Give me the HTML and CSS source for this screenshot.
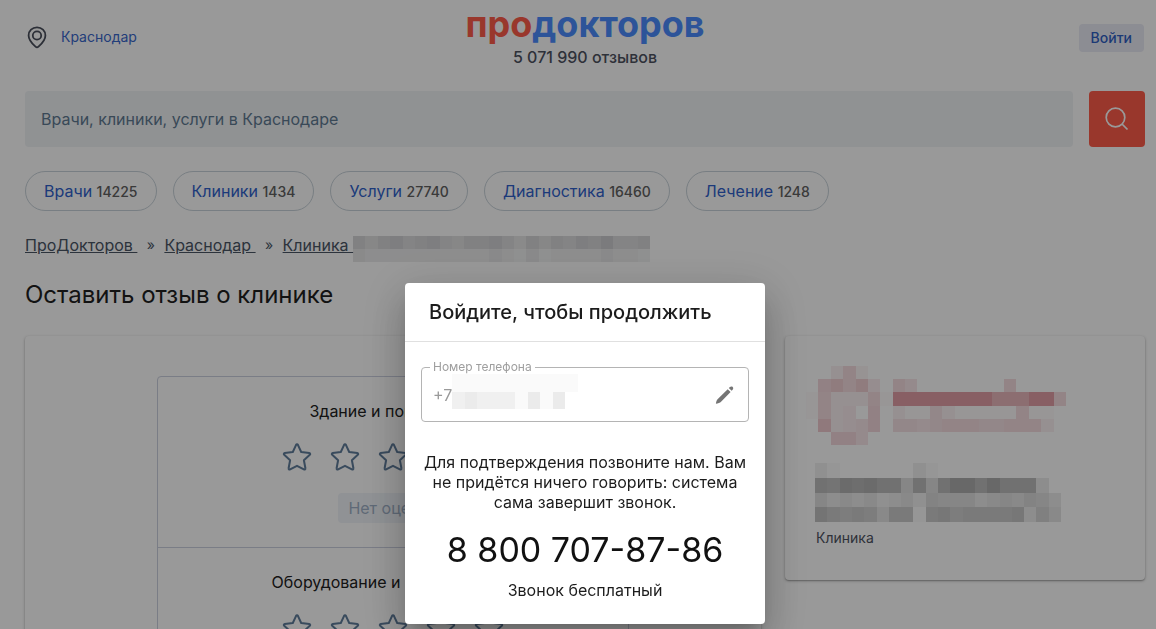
FILE: index.html
```html
<!DOCTYPE html>
<html lang="ru">
<head>
<meta charset="utf-8">
<meta name="viewport" content="width=device-width, initial-scale=1">
<title>ПроДокторов — оставить отзыв о клинике</title>
<link rel="stylesheet" href="styles.css">
</head>
<body>
<svg class="sprite" aria-hidden="true">
  <symbol id="star" viewBox="0 0 32 32">
    <path d="M16 3.200c.4 0 .7.2.9.6l3.300 7.200 8.100 1c.9.1 1.200 1.100.5 1.700l-5.900 5.500 1.500 8.100c.2.9-.7 1.500-1.500 1.100L16 24.800l-6.900 3.600c-.8.4-1.700-.2-1.500-1.100l1.500-8.100-5.900-5.500c-.7-.6-.4-1.600.5-1.700l8.100-1 3.300-7.200c.2-.4.500-.6.900-.6z" fill="none" stroke="currentColor" stroke-width="2" stroke-linejoin="round"/>
  </symbol>
</svg>

<div class="page">
  <header class="header">
    <a class="city" href="#">
      <svg class="city-icon" viewBox="0 0 24 24" aria-hidden="true"><g fill="none" stroke="currentColor" stroke-width="1.800"><path d="M12 2.300c-4.800 0-8.400 3.600-8.400 8.100 0 4.200 3.200 7.900 6.900 11.300.9.800 2.100.8 3 0 3.700-3.400 6.900-7.100 6.900-11.300 0-4.500-3.600-8.100-8.400-8.100z"/><circle cx="12" cy="10.500" r="4.200"/></g></svg>
      <span>Краснодар</span>
    </a>
    <div class="brand">
      <a class="logo" href="#"><span class="logo-accent">про</span>докторов</a>
      <p class="reviews">5 071 990 отзывов</p>
    </div>
    <button class="login" type="button">Войти</button>
  </header>

  <form class="search" role="search">
    <input class="search-input" type="text" aria-label="Поиск" placeholder="Врачи, клиники, услуги в Краснодаре">
    <button class="search-button" type="button" aria-label="Найти">
      <svg class="search-icon" viewBox="0 0 24 24" aria-hidden="true"><g fill="none" stroke="currentColor" stroke-width="1.700"><circle cx="10.500" cy="10.500" r="9.300"/><path d="M17 17l5.500 5.500"/></g></svg>
    </button>
  </form>

  <nav class="chips" aria-label="Разделы">
    <a class="chip" href="#">Врачи <span class="chip-count">14225</span></a>
    <a class="chip" href="#">Клиники <span class="chip-count">1434</span></a>
    <a class="chip" href="#">Услуги <span class="chip-count">27740</span></a>
    <a class="chip" href="#">Диагностика <span class="chip-count">16460</span></a>
    <a class="chip" href="#">Лечение <span class="chip-count">1248</span></a>
  </nav>

  <nav class="crumbs" aria-label="Навигация">
    <a class="crumb" href="#">ПроДокторов </a>
    <span class="crumb-sep">»</span>
    <a class="crumb" href="#">Краснодар </a>
    <span class="crumb-sep">»</span>
    <a class="crumb" href="#">Клиника </a>
    <svg class="mosaic mosaic-crumb" data-rows="86897897688975868798a778 544444444445435344445443" aria-hidden="true"></svg>
  </nav>

  <h1 class="title">Оставить отзыв о клинике</h1>

  <div class="content">
    <main class="card review">
      <div class="ratings">
        <section class="rating">
          <h2 class="rating-title">Здание и помещение</h2>
          <div class="stars"><svg class="star"><use href="#star"/></svg><svg class="star"><use href="#star"/></svg><svg class="star"><use href="#star"/></svg><svg class="star"><use href="#star"/></svg><svg class="star"><use href="#star"/></svg></div>
          <span class="rating-value">Нет оценки</span>
        </section>
        <section class="rating">
          <h2 class="rating-title">Оборудование и медикаменты</h2>
          <div class="stars"><svg class="star"><use href="#star"/></svg><svg class="star"><use href="#star"/></svg><svg class="star"><use href="#star"/></svg><svg class="star"><use href="#star"/></svg><svg class="star"><use href="#star"/></svg></div>
        </section>
      </div>
    </main>
    <aside class="card clinic">
      <svg class="mosaic mosaic-logo" data-rows="003720000000000000000 08a7a4075000000070000 1733371kkkkkkkkfffkk7 173408031163111117110 0b3458066567776677730 008850000000000000000" aria-hidden="true"></svg>
      <svg class="mosaic mosaic-name" data-rows="31000000310000000000 dcfefdd6d6dggdgddd40 64545345376664565764 ca9a95aa1ab9aaaab485" aria-hidden="true"></svg>
      <p class="clinic-type">Клиника</p>
    </aside>
  </div>
</div>

<div class="overlay">
  <div class="dialog" role="dialog" aria-modal="true" aria-labelledby="dialog-title">
    <h2 class="dialog-title" id="dialog-title">Войдите, чтобы продолжить</h2>
    <div class="dialog-body">
      <fieldset class="field">
        <legend class="field-legend"><label for="phone">Номер телефона</label></legend>
        <input class="field-input" id="phone" type="tel" value="+7" readonly>
        <svg class="mosaic mosaic-phone" data-rows="1111111111 3433314140" aria-hidden="true"></svg>
        <button class="edit" type="button" aria-label="Изменить номер">
          <svg class="edit-icon" viewBox="0 0 24 24" aria-hidden="true"><path fill="currentColor" d="M16.600 4.300c.9-.9 2.200-1.300 3.100-.4s.6 2.200-.3 3.100l-.8.800-2.800-2.800zM14.700 6.200l2.900 2.900L8.300 18.400c-1.400 1.400-3.300 2.100-5.400 2.300.2-2.100.9-4 2.400-5.200z"/></svg>
        </button>
      </fieldset>
      <p class="hint">Для подтверждения позвоните нам. Вам не придётся ничего говорить: система сама завершит звонок.</p>
      <a class="phone" href="tel:88007078786">8 800 707-87-86</a>
      <p class="free">Звонок бесплатный</p>
    </div>
  </div>
</div>
<script src="mosaic.js"></script>
</body>
</html>
```
FILE: styles.css
```css
* { box-sizing: border-box; }

body {
  margin: 0;
  background: #fff;
  color: #212121;
  font: 400 16px/24px Inter, "Liberation Sans", sans-serif;
  height: 100vh;
  overflow: hidden;
}

h1, h2, p { margin: 0; font-weight: 400; }
a { text-decoration: none; }
button, input { font: inherit; border: 0; margin: 0; }

.sprite { display: none; }

.page { padding: 12px 11px 0 25px; }

.header {
  display: grid;
  grid-template-columns: 1fr auto 1fr;
  align-items: start;
  height: 79px;
}

.city {
  display: flex;
  align-items: center;
  gap: 12px;
  padding-top: 13px;
  color: #3a68cc;
  font-size: 14px;
}
.city-icon { width: 24px; height: 24px; color: #4a4f5c; }

.brand { text-align: center; }
.logo {
  display: block;
  color: #4b8dff;
  font-size: 36px;
  font-weight: 700;
  line-height: 24px;
}
.logo-accent { color: #ff5c4a; }
.reviews { padding-top: 10px; color: #4e535f; font-weight: 500; line-height: 22px; }

.login {
  justify-self: end;
  margin: 12px 1px 0 0;
  padding: 0 12px;
  border-radius: 4px;
  background: #e9ebf5;
  color: #2f5fc4;
  font-size: 14px;
  font-weight: 500;
  line-height: 28px;
}

.search { display: flex; gap: 16px; }
.search-input {
  flex: 1;
  min-width: 0;
  height: 56px;
  padding: 0 16px;
  border-radius: 4px;
  background: #f0f3f6;
}
.search-input::placeholder { color: #607a92; opacity: 1; }
.search-button {
  display: grid;
  place-items: center;
  width: 56px;
  height: 56px;
  border-radius: 4px;
  background: #ff5c4a;
  color: #fff;
}
.search-icon { width: 24px; height: 24px; }

.chips { display: flex; gap: 16px; padding-top: 24px; }
.chip {
  height: 40px;
  padding: 0 18px;
  border: 1px solid #c9d3da;
  border-radius: 20px;
  color: #2f62cc;
  line-height: 38px;
  white-space: nowrap;
}
.chip-count { color: #616161; font-size: 14px; font-weight: 500; }

.crumbs { display: flex; align-items: center; height: 68px; }
.crumb { color: #4a5565; text-decoration: underline; white-space: pre; }
.crumb-sep { width: 27px; color: #4a5565; font-size: 14px; text-align: center; }

.title { font-size: 24px; line-height: 32px; }

.content { display: flex; align-items: flex-start; gap: 24px; padding-top: 25px; }
.card {
  border-radius: 4px;
  background: #fff;
  box-shadow: 0 1px 3px rgba(0, 0, 0, .3), 0 1px 1px rgba(0, 0, 0, .15);
}

.review { flex: 1; padding: 40px 24px; }
.ratings {
  max-width: 472px;
  margin: 0 auto;
  border: 1px solid #ccd0e0;
  border-radius: 4px;
}
.rating {
  display: flex;
  flex-direction: column;
  align-items: center;
  padding: 22px 24px 24px;
}
.rating + .rating { border-top: 1px solid #ccd0e0; }
.rating-title { font-size: 16px; }
.stars { display: flex; gap: 16px; padding: 18px 0 20px; color: #607d9c; }
.star { width: 32px; height: 32px; }
.rating-value {
  padding: 0 10px;
  border-radius: 4px;
  background: #f0f4f9;
  color: #9fb0c6;
  line-height: 30px;
}

.clinic { width: 360px; padding: 30px; }
.clinic-type { padding: 4px 1px 0; color: #4e535f; font-size: 14px; }

.mosaic { display: block; fill: #000; shape-rendering: crispEdges; }
.mosaic-crumb { width: 297px; height: 26px; margin-top: 8px; fill: #080c14; }
.mosaic-logo { width: 260px; height: 79px; margin-left: -9px; fill: #b90f23; }
.mosaic-name { width: 246px; height: 59px; margin-top: 18px; }

.overlay {
  position: fixed;
  inset: 0;
  display: flex;
  align-items: flex-end;
  justify-content: center;
  padding: 0 11px 5px 25px;
  background: rgba(0, 0, 0, .4);
}
.dialog {
  width: 360px;
  border-radius: 4px;
  background: #fff;
  color: #1c1c1c;
  box-shadow: 0 11px 15px -7px rgba(0, 0, 0, .2), 0 24px 38px 3px rgba(0, 0, 0, .14), 0 9px 46px 8px rgba(0, 0, 0, .12);
}
.dialog-title {
  padding: 13px 24px;
  border-bottom: 1px solid #e0e0e0;
  font-size: 20px;
  font-weight: 500;
  line-height: 32px;
}
.dialog-body { padding: 18px 16px 22px; text-align: center; }

.field {
  position: relative;
  display: flex;
  align-items: center;
  min-width: 0;
  height: 62px;
  margin: 0;
  padding: 0 11px 6px;
  border: 1px solid #b4b4b4;
  border-radius: 4px;
}
.field-legend {
  margin: 0 auto 0 -3px;
  padding: 0 3px;
  color: #9e9e9e;
  font-size: 12px;
  line-height: 14px;
}
.field-input {
  flex: 1;
  min-width: 0;
  padding: 0;
  background: none;
  color: #9a9a9a;
}
.mosaic-phone { position: absolute; left: 30px; top: 0; width: 126px; height: 35px; }
.edit { display: grid; padding: 0; background: none; color: #757575; }
.edit-icon { width: 24px; height: 24px; }

.hint { padding-top: 30px; line-height: 20px; }
.phone { display: block; padding-top: 16px; color: #111; font-size: 34px; line-height: 44px; }
.free { padding-top: 6px; }
```
FILE: mosaic.js
```js
// Each character is one cell: its base-36 value divided by 50 is the opacity.
document.querySelectorAll('.mosaic').forEach(function (svg) {
  var rows = svg.dataset.rows.split(' ');
  svg.setAttribute('viewBox', '0 0 ' + rows[0].length + ' ' + rows.length);
  svg.setAttribute('preserveAspectRatio', 'none');
  rows.forEach(function (row, y) {
    row.split('').forEach(function (ch, x) {
      var value = parseInt(ch, 36);
      if (!value) return;
      var cell = document.createElementNS('http://www.w3.org/2000/svg', 'rect');
      cell.setAttribute('x', x);
      cell.setAttribute('y', y);
      cell.setAttribute('width', 1);
      cell.setAttribute('height', 1);
      cell.setAttribute('fill-opacity', value / 50);
      svg.appendChild(cell);
    });
  });
});
```
